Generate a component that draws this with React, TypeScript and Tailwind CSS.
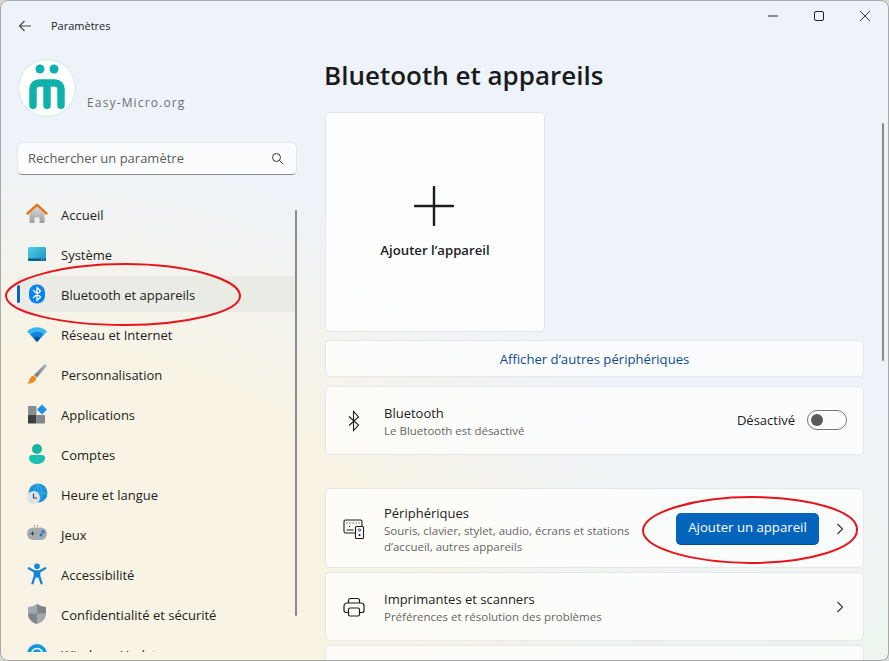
import React from "react";

const I = ({ children, s = 24 }: { children: React.ReactNode; s?: number }) => (
  <svg width={s} height={s} viewBox="0 0 24 24" className="shrink-0" fill="none">{children}</svg>
);

const Home = () => (
  <I>
    <defs>
      <linearGradient id="h1" x1="0" y1="0" x2="0" y2="1"><stop offset="0" stopColor="#d8d8d8" /><stop offset="1" stopColor="#9e9e9e" /></linearGradient>
    </defs>
    <path d="M4.500 11.500 12 4.500l7.500 7V20a1 1 0 0 1-1 1H14.500v-5.500h-5V21H5.500a1 1 0 0 1-1-1Z" fill="url(#h1)" />
    <path d="M2.500 11.500 12 2.800l9.500 8.700" stroke="#e0731c" strokeWidth="2.400" strokeLinecap="round" strokeLinejoin="round" />
  </I>
);
const Sys = () => (
  <I>
    <defs>
      <linearGradient id="s1" x1="0" y1="0" x2="1" y2="1"><stop offset="0" stopColor="#4fd0e2" /><stop offset="1" stopColor="#1a93c8" /></linearGradient>
    </defs>
    <rect x="3" y="5" width="18" height="14" rx="1.500" fill="url(#s1)" />
    <path d="M3 16.500h18V17.500a1.500 1.500 0 0 1-1.500 1.500h-15A1.500 1.500 0 0 1 3 17.500Z" fill="#0c5c8a" />
    <rect x="16" y="17.300" width="1" height="1" fill="#9fd8ee" /><rect x="18" y="17.300" width="1" height="1" fill="#9fd8ee" />
  </I>
);
const Bt = () => (
  <I>
    <rect x="4" y="2.500" width="16" height="19" rx="7.500" fill="#0a84f0" />
    <path d="M8.500 8.500 15.500 15 12 18.500v-13L15.500 9 8.500 15.500" stroke="#fff" strokeWidth="1.300" strokeLinejoin="round" strokeLinecap="round" />
  </I>
);
const Wifi = () => (
  <I>
    <path d="M2 9.500C5 6.500 8.500 5.300 12 5.300s7 1.200 10 4.200l-10 10.500Z" fill="#39b6f0" />
    <path d="M5.500 12.500C7.300 10.700 9.600 9.800 12 9.800s4.700.9 6.500 2.700L12 20Z" fill="#1283d8" />
    <path d="M8.800 16c.9-.9 2-1.300 3.200-1.300s2.300.4 3.200 1.300L12 20Z" fill="#0a4f9e" />
  </I>
);
const Brush = () => (
  <I>
    <defs>
      <linearGradient id="b1" x1="0" y1="1" x2="1" y2="0"><stop offset="0" stopColor="#6e7275" /><stop offset="1" stopColor="#b4b8bb" /></linearGradient>
    </defs>
    <path d="M21 2.500c.7.500.7 1.300.3 2L12 15.500 9 13l9.800-10c.6-.6 1.500-1 2.200-.5Z" fill="url(#b1)" />
    <path d="M8.500 13.500 11.500 16c-.5 3-3.500 6-9.500 5.500 2-1 2-3 3-5 .6-1.400 2-2.500 3.500-3Z" fill="#f08a1d" />
  </I>
);
const Apps = () => (
  <I>
    <rect x="3" y="4" width="8.500" height="9" fill="#8a8d90" />
    <rect x="3" y="13" width="8.500" height="8.500" rx=".5" fill="#3d4043" />
    <rect x="11.500" y="13" width="8.500" height="8.500" rx=".5" fill="#85888b" />
    <path d="M17 2.500 22 7.500 17 12.500 12 7.500Z" fill="#1c8ff0" />
  </I>
);
const User = () => (
  <I>
    <circle cx="12" cy="7" r="5" fill="#14b5a2" />
    <path d="M4 16c0-1.700 1.300-3 3-3h10c1.700 0 3 1.300 3 3 0 3.500-3.500 6-8 6s-8-2.500-8-6Z" fill="#19c2ae" />
  </I>
);
const Clock = () => (
  <I>
    <circle cx="13" cy="11" r="9.500" fill="#1a93d6" />
    <path d="M13 1.500v19M3.500 11h19M13 1.500c-5 5-5 14 0 19M13 1.500c5 5 5 14 0 19" stroke="#52c0ea" strokeWidth=".7" />
    <circle cx="8.500" cy="15.500" r="6.500" fill="#dfe2e6" />
    <path d="M8.500 11.500v4.500H12" stroke="#3a3d40" strokeWidth="1.100" />
  </I>
);
const Game = () => (
  <I>
    <rect x="2" y="5.500" width="20" height="12.500" rx="6.200" fill="#a6abb2" />
    <path d="M5.500 11.500h4M7.500 9.500v4" stroke="#3c3f43" strokeWidth="1" />
    <circle cx="16" cy="13" r="1.400" fill="#1a6fd6" /><circle cx="18" cy="10" r="1.400" fill="#1a6fd6" />
    <circle cx="9.500" cy="3.800" r=".6" fill="#555" /><circle cx="12.500" cy="3.800" r=".6" fill="#555" />
  </I>
);
const Acc = () => (
  <I>
    <circle cx="12" cy="4.300" r="2.800" fill="#0f85dc" />
    <path d="M3.800 6.300 9 9.300h6l5.200-3M9.800 10v4L7.500 21.300M14.200 10v4l2.300 7.300M10 14h4" stroke="#0f85dc" strokeWidth="2.300" strokeLinecap="round" strokeLinejoin="round" />
    <rect x="9.500" y="9" width="5" height="6.500" fill="#0f85dc" />
  </I>
);
const Shield = () => (
  <I>
    <path d="M12 2c3 2 6 3 9 3v6.500c0 5-3.500 9-9 10.500-5.500-1.500-9-5.500-9-10.500V5c3 0 6-1 9-3Z" fill="#a4a8ac" />
    <path d="M12 2c3 2 6 3 9 3v6.500H12Z" fill="#80858a" /><path d="M3 11.500h9V22c-5.500-1.500-9-5.500-9-10.500Z" fill="#80858a" />
  </I>
);
const Upd = () => (
  <I>
    <circle cx="12" cy="12" r="10" fill="#1496e4" />
    <circle cx="12" cy="12" r="5.500" stroke="#fff" strokeWidth="1.500" />
  </I>
);

const nav: [React.ReactNode, string][] = [
  [<Home />, "Accueil"],
  [<Sys />, "Système"],
  [<Bt />, "Bluetooth et appareils"],
  [<Wifi />, "Réseau et Internet"],
  [<Brush />, "Personnalisation"],
  [<Apps />, "Applications"],
  [<User />, "Comptes"],
  [<Clock />, "Heure et langue"],
  [<Game />, "Jeux"],
  [<Acc />, "Accessibilité"],
  [<Shield />, "Confidentialité et sécurité"],
  [<Upd />, "Windows Update"],
];

const Chevron = () => (
  <svg width="16" height="16" viewBox="0 0 16 16" fill="none" className="shrink-0">
    <path d="m5.500 3 5 5-5 5" stroke="#333" strokeWidth="1.100" />
  </svg>
);

const Logo = () => (
  <svg width="58" height="58" viewBox="0 0 58 58" fill="none" className="shrink-0">
    <circle cx="29" cy="29" r="28.500" fill="#fff" stroke="#c9e9e6" />
    <circle cx="22" cy="10" r="4.500" fill="#0fb2ab" /><circle cx="36" cy="10" r="4.500" fill="#0fb2ab" />
    <path d="M15 46.300V30a6 6 0 0 1 6-6h16a6 6 0 0 1 6 6v16.300M29 28v18.300" stroke="#0fb2ab" strokeWidth="7.500" strokeLinecap="round" />
  </svg>
);

export default function App() {
  return (
    <div
      className="w-[889px] h-[661px] bg-[#d8d8d8] overflow-hidden"
      style={{ fontFamily: "'Open Sans','Noto Sans',sans-serif" }}
    >
      <div className="relative w-full h-full flex flex-col overflow-hidden rounded-[8px] border border-[#a9a9a9] bg-[radial-gradient(ellipse_700px_520px_at_0%_100%,#f8f3e4_0%,#f8f3e4_60%,rgba(248,243,228,0)_100%),radial-gradient(ellipse_500px_260px_at_100%_100%,#edf5ee_0%,rgba(237,245,238,0)_100%),linear-gradient(180deg,#eef3fa_0%,#eef3f9_100%)]">
        <header className="h-[49px] shrink-0 flex items-center text-[#1c1c1c]">
          <svg width="16" height="16" viewBox="0 0 16 16" fill="none" className="ml-[16px]">
            <path d="M14 8H2.500M7.500 3 2.500 8l5 5" stroke="#444" strokeWidth="1.100" />
          </svg>
          <span className="ml-[18px] mt-[1px] text-[11px]">Paramètres</span>
          <div className="ml-auto self-start mt-[10px] flex items-center mr-[18px] gap-[36px]">
            <svg width="10" height="10" viewBox="0 0 10 10" fill="none"><path d="M0 5h10" stroke="#222" /></svg>
            <svg width="10" height="10" viewBox="0 0 10 10" fill="none"><rect x=".5" y=".5" width="9" height="9" rx="1.500" stroke="#222" /></svg>
            <svg width="10" height="10" viewBox="0 0 10 10" fill="none"><path d="m0 0 10 10M10 0 0 10" stroke="#222" strokeWidth=".9" /></svg>
          </div>
        </header>
        <div className="flex flex-1 min-h-0">
          <aside className="w-[324px] shrink-0 pl-[16px] h-[602px] overflow-hidden">
            <div className="pt-[9px] pl-[1px] flex items-end">
              <Logo />
              <span className="ml-[11px] mb-[5px] text-[12px] tracking-[1.150px] text-[#6c6e72]">Easy-Micro.org</span>
            </div>
            <div className="mt-[25px] w-[280px] h-[33px] rounded-[5px] bg-white/70 border border-[#e4e6e9] border-b-[#8c8c8c] flex items-center pl-[10px] pr-[12px] justify-between">
              <span className="mt-[1px] text-[13px] text-[#5c5c5c]">Rechercher un paramètre</span>
              <svg width="13" height="13" viewBox="0 0 13 13" fill="none"><circle cx="5.500" cy="5.500" r="4" stroke="#333" /><path d="m8.500 8.500 3.500 3.500" stroke="#333" /></svg>
            </div>
            <nav className="mt-[21px] w-[279px] flex flex-col gap-[4px]">
              {nav.map(([icon, label], i) => (
                <div key={label} className={"relative h-[36px] shrink-0 flex items-center rounded-[4px] pl-[8px] " + (i === 2 ? "bg-[#ebebe6]" : "")}>
                  {i === 2 && <span className="absolute left-0 top-[9px] h-[18px] w-[3px] rounded-full bg-[#0a64c2]" />}
                  {icon}
                  <span className="ml-[12px] mt-[3px] text-[13px] text-[#222] whitespace-nowrap">{label}</span>
                </div>
              ))}
            </nav>
          </aside>
          <main className="flex-1 min-w-0 pt-[8px]">
            <h1 className="h-[54px] -ml-[1px] text-[26px] leading-[34px] font-semibold text-[#1a1a1a]">Bluetooth et appareils</h1>
            <div className="w-[539px] flex flex-col">
              <div className="w-[220px] h-[220px] rounded-[5px] bg-white/80 border border-[#e2e6ea] flex flex-col items-center pt-[73px]">
                <svg width="40" height="40" viewBox="0 0 40 40" fill="none" className="mr-[3px]"><path d="M20 1v38M1 20h38" stroke="#1c1c1c" strokeWidth="2.400" strokeLinecap="round" /></svg>
                <span className="mt-[15px] text-[13.200px] font-semibold text-[#222]">Ajouter l’appareil</span>
              </div>
              <div className="mt-[8px] h-[37px] pt-[2px] rounded-[5px] bg-white/70 border border-[#e5e7e9] flex items-center justify-center">
                <span className="text-[13.150px] text-[#0f4a94]">Afficher d’autres périphériques</span>
              </div>
              <div className="mt-[9px] h-[69px] rounded-[5px] bg-white/70 border border-[#e5e7e9] flex items-center pl-[16px] pr-[16px]">
                <I><path d="M7 7.500 16.500 16 11.500 21.500V2.500l5 5.500L7 16.500" stroke="#1c1c1c" strokeWidth="1.100" /></I>
                <div className="ml-[18px] pt-[1px] flex flex-col">
                  <span className="text-[13px] leading-[18px] text-[#222]">Bluetooth</span>
                  <span className="mt-[1px] text-[11.500px] leading-[16px] text-[#666]">Le Bluetooth est désactivé</span>
                </div>
                <span className="ml-auto text-[13px] text-[#222]">Désactivé</span>
                <div className="ml-[12px] -mt-[1px] w-[40px] h-[20px] rounded-full border border-[#777] flex items-center pl-[3px]">
                  <span className="w-[12px] h-[12px] rounded-full bg-[#5a5a5a]" />
                </div>
              </div>
              <div className="mt-[33px] h-[80px] rounded-[5px] bg-white/70 border border-[#e5e7e9] flex items-center pl-[16px] pr-[15px]">
                <I>
                  <path d="M13.500 17H3.500A1.500 1.500 0 0 1 2 15.500V5.500A1.500 1.500 0 0 1 3.500 4h15A1.500 1.500 0 0 1 20 5.500V10" stroke="#1c1c1c" strokeWidth="1.100" />
                  <path d="M4.500 7h1M7.500 7h1M10.500 7h1M13.500 7h1M16.500 7h1M7 10.500h1M4.500 14h7" stroke="#1c1c1c" strokeWidth="1.100" />
                  <rect x="13.500" y="10.500" width="8" height="12" rx="1" fill="#fdfdfb" stroke="#1c1c1c" strokeWidth="1.100" />
                  <circle cx="17.500" cy="14" r="1.100" stroke="#1c1c1c" strokeWidth=".8" /><circle cx="17.500" cy="19" r="1.100" fill="#1c1c1c" />
                </I>
                <div className="ml-[18px] pt-[3px] flex flex-col">
                  <span className="text-[13px] leading-[18px] text-[#222]">Périphériques</span>
                  <span className="mt-[1px] w-[262px] text-[11.500px] leading-[16px] text-[#666]">Souris, clavier, stylet, audio, écrans et stations d’accueil, autres appareils</span>
                </div>
                <div className="ml-auto flex items-center gap-[13px] mt-[1px]">
                  <button className="w-[143px] h-[32px] rounded-[5px] bg-[#0565bd] border-b border-[#034d91] text-white text-[13.200px]">Ajouter un appareil</button>
                  <Chevron />
                </div>
              </div>
              <div className="mt-[4px] h-[69px] rounded-[5px] bg-white/70 border border-[#e5e7e9] flex items-center pl-[16px] pr-[15px]">
                <I>
                  <path d="M6.500 8V5.500A2 2 0 0 1 8.500 3.500h7A2 2 0 0 1 17.500 5.500V8" stroke="#1c1c1c" strokeWidth="1.200" />
                  <path d="M6.500 17.500H4A2 2 0 0 1 2 15.500V11A3 3 0 0 1 5 8h14a3 3 0 0 1 3 3v4.500a2 2 0 0 1-2 2h-2.500" stroke="#1c1c1c" strokeWidth="1.200" />
                  <rect x="6.500" y="13" width="11" height="8" rx="1.500" stroke="#1c1c1c" strokeWidth="1.200" />
                </I>
                <div className="ml-[18px] pt-[1px] flex flex-col">
                  <span className="text-[13px] leading-[18px] text-[#222]">Imprimantes et scanners</span>
                  <span className="mt-[1px] text-[11.500px] leading-[16px] text-[#666]">Préférences et résolution des problèmes</span>
                </div>
                <div className="ml-auto"><Chevron /></div>
              </div>
              <div className="mt-[4px] h-[69px] rounded-[5px] bg-white/70 border border-[#e5e7e9]" />
            </div>
          </main>
        </div>
        <span className="absolute left-[294px] top-[209px] w-[2px] h-[406px] rounded-full bg-[#8a8a8a]" />
        <span className="absolute left-[881px] top-[122px] w-[2px] h-[238px] rounded-full bg-[#8a8a8a]" />
        <svg width="889" height="661" viewBox="0 0 889 661" fill="none" className="absolute -left-px -top-px pointer-events-none">
          <path d="M6 295C8 280 60 264 125 264C190 264 240 280 240 296C240 312 185 325 125 325C60 325 5 312 6 295Z" stroke="#e8141c" strokeWidth="2" />
          <path d="M643 530C645 512 695 497 752 497C812 497 858 512 857 530C857 548 810 563 750 563C690 562 642 548 643 530Z" stroke="#e8141c" strokeWidth="2" />
        </svg>
      </div>
    </div>
  );
}
